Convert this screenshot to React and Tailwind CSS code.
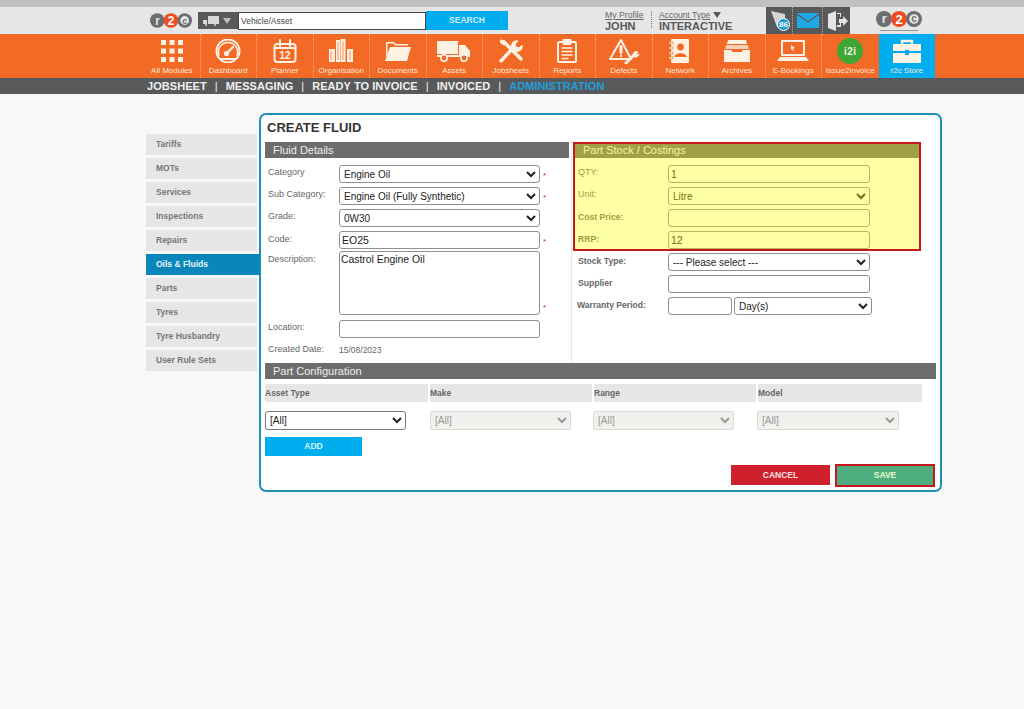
import React from "react";

const C = "#fdf1e4";
const Sw = { fill: "none", stroke: C, strokeWidth: 2, strokeLinecap: "round", strokeLinejoin: "round" };

function Logo({ className }) {
  return (
    <svg viewBox="0 0 46 16" className={className}>
      <circle cx="8" cy="8" r="8" fill="#6d6e71" />
      <text x="8.3" y="12.4" textAnchor="middle" fontSize="13" fontWeight="700" fill="#e6e6e6" fontFamily="Liberation Sans">r</text>
      <circle cx="23" cy="8" r="8" fill="#ee4b23" />
      <text x="23" y="12.6" textAnchor="middle" fontSize="13" fontWeight="700" fill="#fff" fontFamily="Liberation Sans">2</text>
      <circle cx="38" cy="8" r="6.4" fill="#e6e6e6" stroke="#6d6e71" strokeWidth="3.2" />
      <text x="38" y="11.4" textAnchor="middle" fontSize="10" fontWeight="700" fill="#6d6e71" fontFamily="Liberation Sans">c</text>
    </svg>
  );
}

const icons = {
  grid: (
    <svg viewBox="0 0 22 22" className="w-[22px] h-[22px]" fill={C}>
      {[0, 8.5, 17].flatMap((y) => [0, 8.5, 17].map((x) => <rect key={x + "-" + y} x={x} y={y} width="5" height="5" />))}
    </svg>
  ),
  gauge: (
    <svg viewBox="0 0 28 24" className="w-[28px] h-[24px]" {...Sw}>
      <circle cx="14" cy="12" r="11.5" />
      <path d="M5 16a9.5 9.5 0 1 1 18 0" strokeWidth="1.4" />
      <path d="M13 14l6-6" strokeWidth="2.4" />
      <circle cx="12.5" cy="14.5" r="1.6" fill={C} />
      <path d="M6 20h16" />
    </svg>
  ),
  planner: (
    <svg viewBox="0 0 24 24" className="w-[24px] h-[24px]" {...Sw}>
      <rect x="1.5" y="5" width="21" height="18" rx="3" />
      <path d="M1.5 9h21M7 1v6M17 1v6" />
      <text x="12" y="20" textAnchor="middle" fontSize="10" fontWeight="700" fill={C} stroke="none" fontFamily="Liberation Sans">12</text>
    </svg>
  ),
  org: (
    <svg viewBox="0 0 24 24" className="w-[24px] h-[24px]" fill={C}>
      <rect x="0" y="10" width="6" height="13" />
      <rect x="7" y="1" width="4" height="22" />
      <rect x="11.5" y="0" width="5" height="23" />
      <rect x="18" y="10" width="6" height="13" />
      <path d="M2 12v9M9 3v18M14 2v19M21 12v9" stroke="#f26a26" strokeWidth="0.7" />
    </svg>
  ),
  folder: (
    <svg viewBox="0 0 26 22" className="w-[26px] h-[22px]" fill={C}>
      <path d="M1 2h8l2 2h12v1.5H10L8.6 3.5H2.5V14L1 18z" />
      <path d="M5 7h21l-4 14H0z" />
    </svg>
  ),
  truck: (
    <svg viewBox="0 0 34 22" className="w-[34px] h-[22px]" fill={C}>
      <rect x="0" y="1" width="21" height="13" />
      <path d="M22 5h6l5 6v5H22z" />
      <rect x="0" y="15" width="33" height="2" />
      <circle cx="7" cy="18" r="3.2" fill="#f26a26" stroke={C} strokeWidth="1.6" />
      <circle cx="27" cy="18" r="3.2" fill="#f26a26" stroke={C} strokeWidth="1.6" />
    </svg>
  ),
  tools: (
    <svg viewBox="0 0 24 24" className="w-[24px] h-[24px]" {...Sw}>
      <path d="M2 22L15 8" strokeWidth="3.4" />
      <path d="M13 9a5 5 0 0 1 6-7l-3 3 1 3 3 1 3-3a5 5 0 0 1-7 6z" fill={C} strokeWidth="1" />
      <path d="M5 3l17 17" strokeWidth="3.4" />
      <path d="M2 1l4 1 1 3-2 1-3-2z" fill={C} strokeWidth="1" />
    </svg>
  ),
  report: (
    <svg viewBox="0 0 20 24" className="w-[20px] h-[24px]" {...Sw}>
      <rect x="1" y="3" width="18" height="20" rx="1.5" />
      <rect x="6.5" y="1" width="7" height="4" fill={C} />
      <path d="M5 9h10M5 12.5h10M5 16h10M5 19.5h6" strokeWidth="1.3" />
    </svg>
  ),
  defect: (
    <svg viewBox="0 0 32 26" className="w-[32px] h-[26px]" {...Sw}>
      <path d="M13 2L2 21h21z" />
      <path d="M13 8.5v6" strokeWidth="3" />
      <circle cx="13" cy="18" r="1.2" fill={C} stroke="none" />
      <path d="M18 25l8-8" strokeWidth="3" />
      <path d="M25 18a3.5 3.5 0 0 1 5-4l-2 2 1 1 2-1a3.5 3.5 0 0 1-6 2z" fill={C} strokeWidth="1" />
    </svg>
  ),
  network: (
    <svg viewBox="0 0 22 24" className="w-[22px] h-[24px]" fill={C}>
      <rect x="2" y="0" width="18" height="24" rx="1" />
      <rect x="0" y="3" width="4" height="2" stroke="#f26a26" strokeWidth="0.6" />
      <rect x="0" y="8" width="4" height="2" stroke="#f26a26" strokeWidth="0.6" />
      <rect x="0" y="13" width="4" height="2" stroke="#f26a26" strokeWidth="0.6" />
      <rect x="0" y="18" width="4" height="2" stroke="#f26a26" strokeWidth="0.6" />
      <circle cx="11.5" cy="8" r="3.4" fill="#f26a26" />
      <path d="M5.5 18c0-5 12-5 12 0z" fill="#f26a26" />
    </svg>
  ),
  archive: (
    <svg viewBox="0 0 26 22" className="w-[26px] h-[22px]" fill={C}>
      <path d="M4 0h18l1 4H3z" />
      <path d="M2 5h22l1 4H1z" opacity=".75" />
      <path d="M0 10h8v2h10v-2h8v12H0z" />
    </svg>
  ),
  laptop: (
    <svg viewBox="0 0 32 22" className="w-[32px] h-[22px]" fill={C}>
      <path d="M4 0h24v16H4zM6 2v12h20V2z" fillRule="evenodd" />
      <path d="M3 17h26l3 4H0z" />
      <path d="M14 5l4 3-2 .5 1 2-1 .5-1-2-1 1z" />
    </svg>
  ),
  i2i: (
    <div className="w-[26px] h-[26px] rounded-full bg-[#3fa535] flex items-center justify-center text-[10px] font-bold text-[#f4f4e8] tracking-[0.5px]">i2i</div>
  ),
  store: (
    <svg viewBox="0 0 28 24" className="w-[28px] h-[24px]" fill={C}>
      <path d="M9 5V2h10v3" fill="none" stroke={C} strokeWidth="2.4" />
      <path d="M0 5h28v7H16v-1h-4v1H0z" />
      <path d="M0 14h12v2h4v-2h12v10H0z" />
    </svg>
  ),
};

const navItems = [
  ["grid", "All Modules"], ["gauge", "Dashboard"], ["planner", "Planner"], ["org", "Organisation"],
  ["folder", "Documents"], ["truck", "Assets"], ["tools", "Jobsheets"], ["report", "Reports"],
  ["defect", "Defects"], ["network", "Network"], ["archive", "Archives"], ["laptop", "E-Bookings"],
  ["i2i", "Issue2Invoice"], ["store", "r2c Store"],
];

const side = ["Tariffs", "MOTs", "Services", "Inspections", "Repairs", "Oils & Fluids", "Parts", "Tyres", "Tyre Husbandry", "User Rule Sets"];

const field = "h-[18px] rounded-[3px] border border-[#8f8f8f] bg-white text-[#222] leading-none";
const sel = field + " text-[10px] pl-0";
const inp = field + " text-[10.5px] px-[2px]";

function Row({ label, children, star, lw = "w-[74px]", pl = "pl-[3px]", mb = "mb-[4px]", bold = "font-normal text-[9px]", lt = "" }) {
  return (
    <div className={"flex items-start " + mb}>
      <div className={lw + " " + pl + " " + lt + " " + bold + " shrink-0 text-[#666] leading-[15px]"}>{label}</div>
      {children}
      {star && <span className="ml-[3px] text-[8px] text-[#d0202e] self-end leading-[14px]">*</span>}
    </div>
  );
}

const boldLabel = "font-bold text-[8.6px]";

export default function App() {
  return (
    <div className="min-h-[709px] bg-[#f8f8f8] font-['Liberation_Sans',Arial,sans-serif] overflow-hidden">
      <div className="h-[7px] bg-[#bfc0c2]" />
      {/* top bar */}
      <div className="h-[27px] bg-[#e6e6e6] flex items-start pl-[150px]">
        <Logo className="w-[42px] h-[15px] mt-[6px]" />
        <div className="ml-[6px] mt-[5px] h-[17px] w-[40px] bg-[#58595b] flex items-center pl-[5px] gap-[4px]">
          <svg viewBox="0 0 16 10" className="w-[16px] h-[10px]" fill="#d8d8d8"><rect x="5" y="0" width="11" height="8" /><path d="M0 4h4v4H0z" /><circle cx="3" cy="9" r="1" /><circle cx="12" cy="9" r="1" /></svg>
          <svg viewBox="0 0 8 6" className="w-[8px] h-[6px]" fill="#bdbdbd"><path d="M0 0h8L4 6z" /></svg>
        </div>
        <div className="mt-[5px] h-[18px] w-[188px] bg-white border border-[#444] flex items-center pl-[2px] text-[8.5px] text-[#444]">Vehicle/Asset</div>
        <div className="mt-[4px] h-[19px] w-[82px] bg-[#00aeef] flex items-center justify-center text-[8.5px] font-bold text-[#cfeefc]">SEARCH</div>
        <div className="ml-[97px] mt-[4px] leading-none w-[38px]">
          <div className="text-[8.7px] text-[#666] underline whitespace-nowrap">My Profile</div>
          <div className="text-[11px] font-bold text-[#58595b] mt-[1px]">JOHN</div>
        </div>
        <div className="ml-[8px] mt-[4px] h-[17px] border-l border-dotted border-[#777]" />
        <div className="ml-[7px] mt-[4px] leading-none w-[72px]">
          <div className="flex items-center gap-[3px]">
            <span className="text-[8.5px] text-[#666] underline whitespace-nowrap">Account Type</span>
            <svg viewBox="0 0 8 6" className="w-[8px] h-[6px]" fill="#58595b"><path d="M0 0h8L4 6z" /></svg>
          </div>
          <div className="text-[11px] font-bold text-[#58595b] mt-[1px] whitespace-nowrap">INTERACTIVE</div>
        </div>
        <div className="ml-[35px] h-[27px] w-[84px] bg-[#58595b] flex items-center">
          <div className="w-[27px] h-full flex items-center justify-center border-r border-dotted border-[#aaa] relative">
            <svg viewBox="0 0 20 22" className="w-[20px] h-[22px] ml-[1px]" fill="#d4d4d4"><path d="M1 1l14 3v16l-8-3z" /></svg>
            <span className="absolute right-[2px] top-[11px] w-[13px] h-[13px] rounded-full bg-[#1c9ad6] border border-white text-white text-[8px] font-bold flex items-center justify-center leading-none">86</span>
          </div>
          <div className="w-[30px] h-full flex items-center justify-center border-r border-dotted border-[#aaa]">
            <svg viewBox="0 0 22 15" className="w-[22px] h-[15px]"><rect width="22" height="15" fill="#1eaae7" /><path d="M0 1l11 8 11-8" fill="none" stroke="#58595b" strokeWidth="1.2" /></svg>
          </div>
          <div className="flex-1 flex items-center justify-center">
            <svg viewBox="0 0 22 20" className="w-[22px] h-[20px]" fill="#e4e4e4"><path d="M2 3l8-3v20l-8-3z" /><path d="M11 2h4v4h-1V3h-3zM11 14h3v-3h1v5h-4z" /><path d="M13 8h4V5l5 5-5 5v-3h-4z" /></svg>
          </div>
        </div>
        <div className="ml-[26px] mt-[4px] flex flex-col items-center">
          <Logo className="w-[46px] h-[16px]" />
          <div className="mt-[3px] w-[38px] h-[1px] bg-[#999]" />
        </div>
      </div>
      {/* modules */}
      <div className="h-[44px] bg-[#f26a26] flex pl-[144px]">
        {navItems.map(([k, label], i) => {
          const active = k === "store";
          return (
            <div key={k} className={"w-[56.5px] h-full flex flex-col items-center " + (active ? "bg-[#00aeef]" : i < 12 ? "border-r border-dotted border-[#f9a77c]" : "")}>
              <div className="h-[32px] flex items-center justify-center pt-[2px]">{icons[k]}</div>
              <div className="text-[8px] leading-[9px] text-[#fde6d4] whitespace-nowrap">{label}</div>
            </div>
          );
        })}
      </div>
      {/* sub nav */}
      <div className="h-[16px] bg-[#58595b] flex items-center pl-[147px] text-[11px] tracking-[0.05px] font-bold text-[#f0f0f0] whitespace-nowrap leading-none">
        <span>JOBSHEET</span><span className="mx-[8px] font-normal">|</span>
        <span>MESSAGING</span><span className="mx-[8px] font-normal">|</span>
        <span>READY TO INVOICE</span><span className="mx-[8px] font-normal">|</span>
        <span>INVOICED</span><span className="mx-[8px] font-normal">|</span>
        <span className="text-[#1f9ed8]">ADMINISTRATION</span>
      </div>
      {/* main */}
      <div className="flex items-start pl-[146px] pt-[19px]">
        <div className="w-[113px] pt-[21px] shrink-0 relative z-10 flex flex-col gap-[3px]">
          {side.map((s) => {
            const on = s === "Oils & Fluids";
            return (
              <div key={s} className={"h-[21px] pl-[10px] flex items-center text-[8.5px] font-bold " + (on ? "w-[114px] bg-[#0a86bb] text-[#e8f6fc]" : "w-[111px] bg-[#e6e6e6] text-[#777]")}>{s}</div>
            );
          })}
        </div>
        <div className="relative w-[683px] h-[379px] bg-white border-2 border-[#1f8fb8] rounded-[7px] px-[4px]">
          <div className="h-[27px] pl-[2px] pt-[5px] text-[13px] font-bold text-[#333] leading-[15px]">CREATE FLUID</div>
          <div className="flex h-[221px]">
            <div className="w-[307px] border-r border-[#e6e6e6] pr-[2px]">
              <div className="h-[16px] bg-[#6d6d6d] text-[#eee] text-[11px] pl-[8px] leading-[16px] mb-[7px]">Fluid Details</div>
              <Row label="Category" star>
                <select className={sel + " w-[201px]"} defaultValue="a"><option value="a">Engine Oil</option></select>
              </Row>
              <Row label="Sub Category:" star>
                <select className={sel + " w-[201px]"} defaultValue="a"><option value="a">Engine Oil (Fully Synthetic)</option></select>
              </Row>
              <Row label="Grade:">
                <select className={sel + " w-[201px]"} defaultValue="a"><option value="a">0W30</option></select>
              </Row>
              <Row label="Code:" star mb="mb-[2px]" lt="pt-[1px]">
                <input className={inp + " w-[201px]"} defaultValue="EO25" />
              </Row>
              <Row label="Description:" star mb="mb-[5px]" lt="pt-[1px]">
                <textarea className="w-[201px] h-[64px] rounded-[3px] border border-[#8f8f8f] bg-white text-[10.4px] text-[#222] px-[1px] pt-[2px] leading-[12px] resize-none" defaultValue="Castrol Engine Oil" />
              </Row>
              <Row label="Location:" mb="mb-[4px]">
                <input className={inp + " w-[201px]"} />
              </Row>
              <div className="flex items-center">
                <div className="w-[74px] pl-[3px] text-[9px] text-[#666]">Created Date:</div>
                <div className="text-[8.5px] text-[#666] pt-[2px]">15/08/2023</div>
              </div>
            </div>
            <div className="ml-[1px] w-[348px]">
              <div className="h-[16px] w-[346px] bg-[#6d6d6d] text-[#eee] text-[11px] pl-[10px] leading-[16px] mb-[7px]">Part Stock / Costings</div>
              <Row label="QTY:" lw="w-[95px]" pl="pl-[5px]">
                <input className={inp + " w-[202px]"} defaultValue="1" />
              </Row>
              <Row label="Unit:" lw="w-[95px]" pl="pl-[5px]">
                <select className={sel + " w-[202px]"} defaultValue="a"><option value="a">Litre</option></select>
              </Row>
              <Row label="Cost Price:" lw="w-[95px]" pl="pl-[5px]" bold={boldLabel} lt="pt-[1px]">
                <input className={inp + " w-[202px]"} />
              </Row>
              <Row label="RRP:" lw="w-[95px]" pl="pl-[5px]" bold={boldLabel} lt="pt-[1px]">
                <input className={inp + " w-[202px]"} defaultValue="12" />
              </Row>
              <Row label="Stock Type:" lw="w-[95px]" pl="pl-[5px]" bold={boldLabel} lt="pt-[1px]">
                <select className={sel + " w-[202px]"} defaultValue="a"><option value="a">--- Please select ---</option></select>
              </Row>
              <Row label="Supplier" lw="w-[95px]" pl="pl-[5px]" bold={boldLabel} lt="pt-[1px]">
                <input className={inp + " w-[202px]"} />
              </Row>
              <Row label="Warranty Period:" lw="w-[95px]" pl="pl-[4px]" bold={boldLabel} lt="pt-[1px]">
                <input className={inp + " w-[64px]"} />
                <select className={sel + " w-[138px] ml-[2px]"} defaultValue="a"><option value="a">Day(s)</option></select>
              </Row>
            </div>
          </div>
          <div className="h-[16px] w-[671px] bg-[#6d6d6d] text-[#eee] text-[11px] pl-[8px] leading-[16px] mb-[5px]">Part Configuration</div>
          <div className="grid grid-cols-[163px_162px_162px_164px] gap-x-[2px] w-[657px] mb-[9px]">
            {["Asset Type", "Make", "Range", "Model"].map((h) => (
              <div key={h} className="h-[18px] bg-[#e6e6e6] text-[8.5px] font-bold text-[#666] leading-[18px]">{h}</div>
            ))}
          </div>
          <div className="flex mb-[7px]">
            <select className="w-[141px] h-[19px] rounded-[3px] border border-[#777] bg-white text-[10px] text-[#222] pl-0" defaultValue="a"><option value="a">[All]</option></select>
            <select disabled className="ml-[24px] w-[141px] h-[19px] rounded-[2px] border border-[#d8d8d4] bg-[#f0f0ec] text-[10px] text-[#999] pl-0" defaultValue="a"><option value="a">[All]</option></select>
            <select disabled className="ml-[22px] w-[141px] h-[19px] rounded-[2px] border border-[#d8d8d4] bg-[#f0f0ec] text-[10px] text-[#999] pl-0" defaultValue="a"><option value="a">[All]</option></select>
            <select disabled className="ml-[23px] w-[142px] h-[19px] rounded-[2px] border border-[#d8d8d4] bg-[#f0f0ec] text-[10px] text-[#999] pl-0" defaultValue="a"><option value="a">[All]</option></select>
          </div>
          <div className="w-[97px] h-[19px] bg-[#00aeef] text-[8.5px] font-bold text-[#d8f3fe] flex items-center justify-center">ADD</div>
          <div className="flex justify-end gap-[7px] pr-[3px] mt-[9px]">
            <div className="w-[99px] h-[20px] bg-[#cf202e] text-[8.5px] font-bold text-[#f8e0e0] flex items-center justify-center">CANCEL</div>
            <div className="w-[96px] h-[20px] bg-[#4fae80] text-[8.5px] font-bold text-[#e8f6c8] flex items-center justify-center">SAVE</div>
          </div>
          {/* annotation overlays */}
          <div className="absolute left-[312px] top-[27px] w-[348px] h-[109px] border-2 border-[#c8161d] bg-[#ffff00]/35" />
          <div className="absolute left-[574px] top-[349px] w-[100px] h-[23px] border-2 border-[#c8161d]" />
        </div>
      </div>
    </div>
  );
}
